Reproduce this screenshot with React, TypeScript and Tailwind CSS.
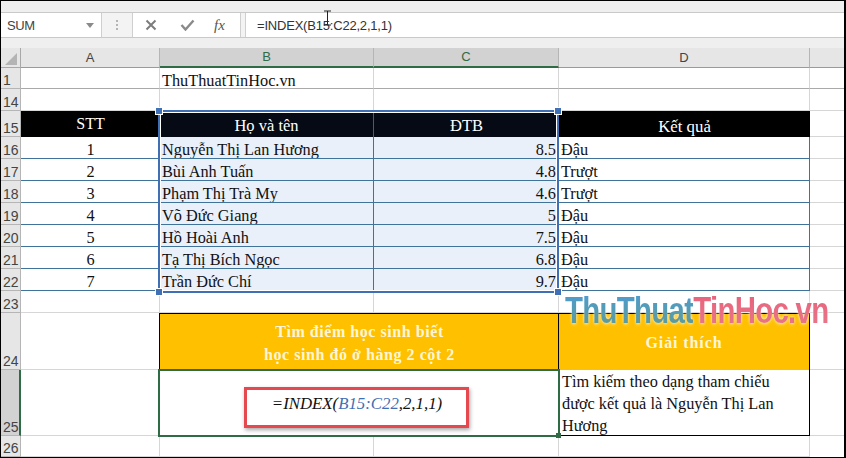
import React from 'react';

const serif = "font-['Liberation_Serif',serif]";
const sans = "font-['Liberation_Sans',Arial,sans-serif]";

const students = [
  ['16', '1', 'Nguyễn Thị Lan Hương', '8.5', 'Đậu'],
  ['17', '2', 'Bùi Anh Tuấn', '4.8', 'Trượt'],
  ['18', '3', 'Phạm Thị Trà My', '4.6', 'Trượt'],
  ['19', '4', 'Võ Đức Giang', '5', 'Đậu'],
  ['20', '5', 'Hồ Hoài Anh', '7.5', 'Đậu'],
  ['21', '6', 'Tạ Thị Bích Ngọc', '6.8', 'Đậu'],
  ['22', '7', 'Trần Đức Chí', '9.7', 'Đậu'],
];

const RowHead: React.FC<{ n: string; active?: boolean }> = ({ n, active }) => (
  <div
    className={`flex items-end pl-[2px] text-[14px] leading-[16px] text-[#444] border-b border-r border-[#b5b5b5] ${sans} ${
      active ? 'bg-[#d2d2d2] border-r-2 border-r-[#2f6b45] text-[#2f6b45]' : 'bg-[#e6e6e6]'
    }`}
  >
    {n}
  </div>
);

const Cell: React.FC<{ className?: string; children?: React.ReactNode }> = ({ className = '', children }) => (
  <div className={`border-r border-b border-[#d6d6d6] text-[16.3px] leading-[26px] text-[#111] whitespace-nowrap overflow-hidden ${serif} ${className}`}>
    {children}
  </div>
);

const FormulaBar = () => (
  <div className="h-[47px] bg-[#efefef] pt-[11px]">
    <div className="flex h-[26px] items-stretch border-y border-[#c9c9c9] bg-[#f3f3f3]">
      <div className={`flex w-[101px] items-center justify-between border-r border-[#cfcfcf] bg-white pl-[6px] pr-[7px] pt-[1px] text-[13px] tracking-[-0.4px] text-[#444] ${sans}`}>
        SUM
        <span className="h-0 w-0 border-x-[4px] border-t-[5px] border-x-transparent border-t-[#8a8a8a]" />
      </div>
      <div className="flex w-[30px] items-center justify-center">
        <span className="h-[10px] border-l-2 border-dotted border-[#b5b5b5]" />
      </div>
      <div className="flex w-[109px] items-center border-x border-[#cfcfcf] bg-white pl-[12px]">
        <svg width="12" height="12" viewBox="0 0 12 12" className="mr-[23px]">
          <path d="M1.5 1.5 10.5 10.5M10.5 1.5 1.5 10.5" stroke="#7c7c7c" strokeWidth="2" fill="none" />
        </svg>
        <svg width="15" height="12" viewBox="0 0 15 12" className="mr-[19px]">
          <path d="M1.5 6 5.5 10.5 13.5 1.5" stroke="#8a8a8a" strokeWidth="2.4" fill="none" />
        </svg>
        <span className={`text-[15px] italic text-[#555] ${serif}`}>fx</span>
      </div>
      <div className="w-[4px]" />
      <div className={`flex flex-1 items-center border-l border-[#cfcfcf] bg-white pl-[11px] pt-[1px] text-[13px] tracking-[-0.2px] text-[#333] ${sans}`}>
        =INDEX(B15:C22,2,1,1)
      </div>
    </div>
  </div>
);

export default function App() {
  return (
    <div className="relative h-[458px] w-[846px] overflow-hidden border-t border-l border-r-2 border-b border-black bg-white">
      <FormulaBar />

      <div className="grid h-[409px] grid-cols-[20px_139px_214px_185px_251px_1fr] grid-rows-[20px_21px_22px_26px_repeat(7,22px)_22px_57px_66px_1fr]">
        <div className="relative border-r border-b border-[#a8a8a8] bg-[#e6e6e6]">
          <span className="absolute bottom-[2px] right-[3px] h-0 w-0 border-b-[12px] border-l-[12px] border-l-transparent border-b-[#b4b4b4]" />
        </div>
        {['A', 'B', 'C', 'D'].map((c) => {
          const on = c === 'B' || c === 'C';
          return (
            <div
              key={c}
              className={`flex items-center justify-center border-r text-[13px] ${sans} ${
                on
                  ? 'border-b-2 border-r-[#b5b5b5] border-b-[#2f6b45] bg-[#d2d2d2] text-[#2f6b45]'
                  : 'border-b border-r-[#b5b5b5] border-b-[#9a9a9a] bg-[#e6e6e6] text-[#444]'
              }`}
            >
              {c}
            </div>
          );
        })}
        <div className="border-b border-[#9a9a9a] bg-[#e6e6e6]" />

        <RowHead n="1" />
        <Cell className="border-b-[#a9a9a9]" />
        <Cell className="border-b-[#a9a9a9] pl-[2px]">ThuThuatTinHoc.vn</Cell>
        <Cell className="border-b-[#a9a9a9]" />
        <Cell className="border-b-[#a9a9a9]" />
        <Cell className="border-b-[#a9a9a9] border-r-0" />

        <RowHead n="14" />
        <Cell />
        <Cell />
        <Cell />
        <Cell />
        <Cell className="border-r-0" />

        <RowHead n="15" />
        <div className={`flex items-center justify-center bg-black text-[16px] text-white ${serif}`}>STT</div>
        <div className={`flex items-center justify-center border-r border-[#2e5fa8] bg-[#050a14] pt-[5px] text-[16.5px] text-white ${serif}`}>Họ và tên</div>
        <div className={`flex items-center justify-center bg-[#050a14] pt-[5px] text-[16.5px] text-white ${serif}`}>ĐTB</div>
        <div className={`flex items-center justify-center bg-black pt-[5px] text-[16.8px] text-white ${serif}`}>Kết quả</div>
        <Cell className="border-r-0" />

        {students.map(([row, stt, name, score, result]) => (
          <React.Fragment key={row}>
            <RowHead n={row} />
            <Cell className="border-b-[#3f7399] border-r-0 text-center">{stt}</Cell>
            <Cell className="border-r-[#3f7399] border-b-[#3f7399] bg-[#e9f0fa] pl-[2px]">{name}</Cell>
            <Cell className="border-r-0 border-b-[#3f7399] bg-[#e9f0fa] pr-[3px] text-right">{score}</Cell>
            <Cell className="border-r-[#3f7399] border-b-[#3f7399] pl-[2px]">{result}</Cell>
            <Cell className="border-r-0" />
          </React.Fragment>
        ))}

        <RowHead n="23" />
        <Cell />
        <Cell />
        <Cell />
        <Cell />
        <Cell className="border-r-0" />

        <RowHead n="24" />
        <Cell />
        <div className={`col-span-2 -ml-[1px] flex items-center justify-center border-t border-l border-black bg-[#ffc000] pt-[1px] text-center text-[16px] font-bold leading-[23px] tracking-[0.55px] text-[#fff6d8] ${serif}`}>
          <span>
            Tìm điểm học sinh biết
            <br />
            học sinh đó ở hàng 2 cột 2
          </span>
        </div>
        <div className={`-ml-[1px] flex items-center justify-center border-x border-t border-black bg-[#ffc000] pt-[1px] text-[16px] font-bold tracking-[0.9px] text-[#fff6d8] ${serif}`}>Giải thích</div>
        <Cell className="border-r-0" />

        <RowHead n="25" active />
        <Cell />
        <div className={`relative z-10 col-span-2 -my-[1px] -ml-[2px] -mr-[1px] flex items-center justify-center border-2 border-[#2f6b45] pr-[4px] pt-[2px] text-[16.8px] italic text-[#111] ${serif}`}>
          <span>
            =INDEX(<span className="text-[#3f6fb5]">B15:C22</span>,2,1,1)
          </span>
          <span className="absolute left-[84px] top-[16px] h-[41px] w-[225px] border-[3px] border-[#e5494f] shadow-[1px_2px_4px_rgba(0,0,0,0.35)]" />
          <span className="absolute -bottom-[3px] -right-[3px] h-[5px] w-[5px] bg-[#2f6b45]" />
        </div>
        <div className={`-ml-[1px] border-x border-b border-black pl-[3px] pt-[1px] text-[16.3px] leading-[22px] text-[#111] ${serif}`}>
          Tìm kiếm theo dạng tham chiếu
          <br />
          được kết quả là Nguyễn Thị Lan
          <br />
          Hương
        </div>
        <Cell className="border-r-0" />

        <RowHead n="26" />
        <Cell />
        <Cell />
        <Cell />
        <Cell />
        <Cell className="border-r-0 border-b-0" />
      </div>

      {/* selection over B15:C22 */}
      <div className="pointer-events-none absolute left-[157px] top-[109px] h-[183px] w-[401px] border-2 border-[#3f6fb5] shadow-[inset_0_0_0_1px_white]">
        {[
          '-left-[4px] -top-[4px]',
          '-right-[4px] -top-[4px]',
          '-left-[4px] -bottom-[4px]',
          '-right-[4px] -bottom-[4px]',
        ].map((pos) => (
          <span key={pos} className={`absolute h-[6px] w-[6px] bg-[#3f6fb5] outline outline-1 outline-white ${pos}`} />
        ))}
      </div>

      {/* watermark */}
      <div className={`pointer-events-none absolute left-[564px] top-[288px] z-20 origin-left scale-x-[0.795] whitespace-nowrap text-[37px] font-bold leading-[44px] tracking-[-0.9px] [filter:drop-shadow(0_0_2px_white)] ${sans}`}>
        <span className="bg-gradient-to-b from-[#4d9bd6] to-[#5f9a8e] bg-clip-text text-transparent">ThuThuat</span>
        <span className="bg-gradient-to-b from-[#e8607a] to-[#e8788a] bg-clip-text text-transparent">TinHoc.vn</span>
      </div>

      {/* text cursor */}
      <svg width="9" height="16" viewBox="0 0 9 16" className="absolute left-[322px] top-[9px]">
        <path d="M1 1h7M4.5 1v14M1 15h7" stroke="#222" strokeWidth="1" fill="none" />
      </svg>
    </div>
  );
}
